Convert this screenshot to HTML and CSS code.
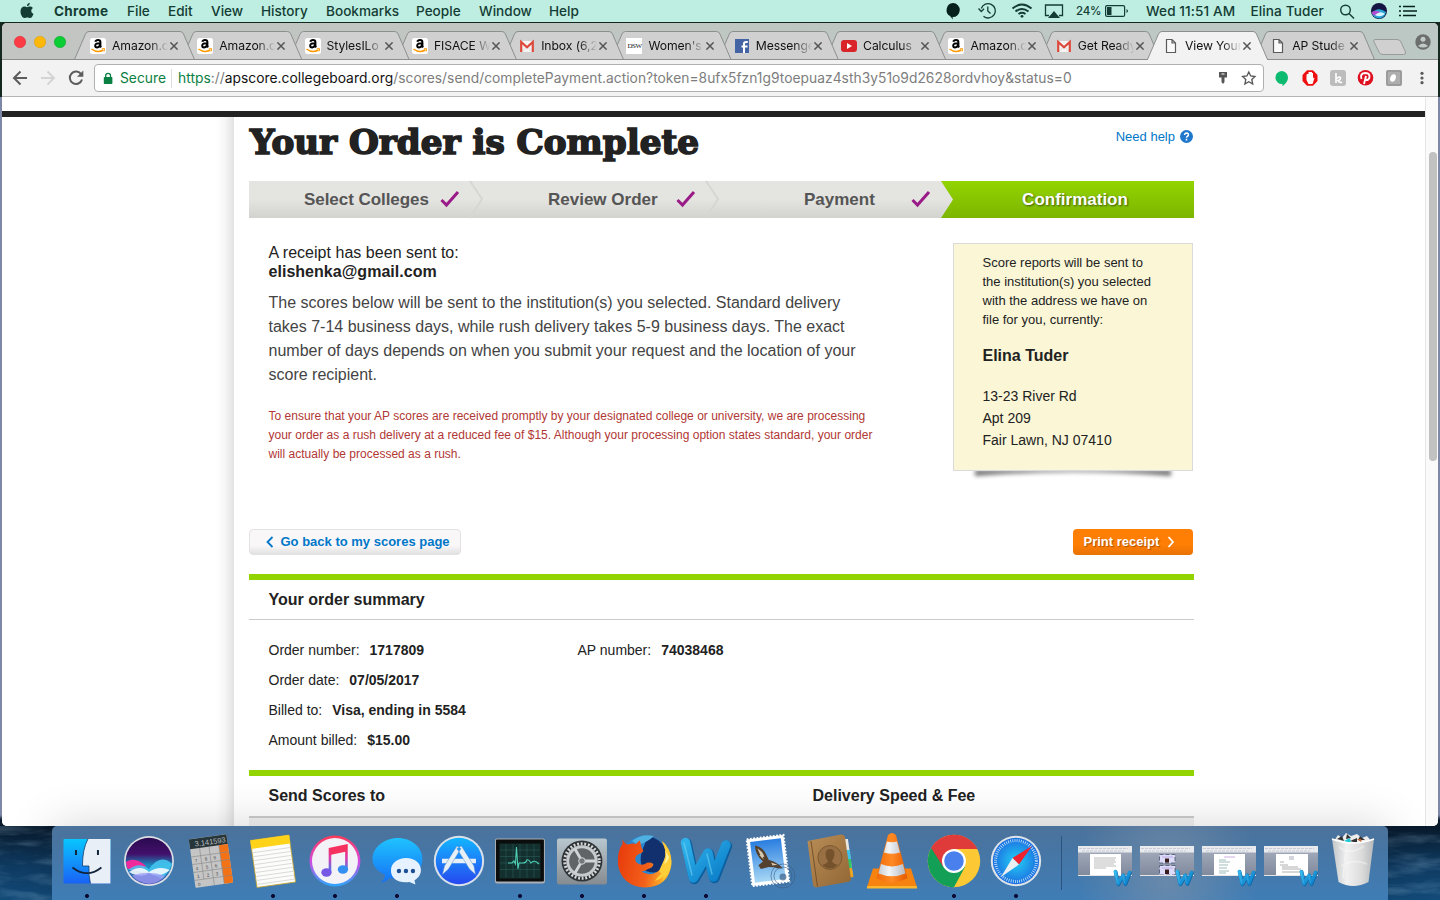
FILE: index.html
```html
<!DOCTYPE html>
<html lang="en">
<head>
<meta charset="utf-8">
<title>View Your Order</title>
<link rel="stylesheet" href="styles.css">
</head>
<body>
<svg class="defs" width="0" height="0">
  <defs>
    <linearGradient id="gBlue" x2="0" y2="1"><stop stop-color="#1fc3ff"/><stop offset="1" stop-color="#1670f5"/></linearGradient>
    <linearGradient id="gFinder" x2="0" y2="1"><stop stop-color="#08c6ff"/><stop offset="1" stop-color="#1a62f5"/></linearGradient>
    <linearGradient id="gSiri" x2="0" y2="1"><stop stop-color="#2b0a50"/><stop offset=".35" stop-color="#42106b"/><stop offset=".6" stop-color="#1a8fc0"/><stop offset="1" stop-color="#3a43a0"/></linearGradient>
    <linearGradient id="gMusic" x2="0" y2="1"><stop stop-color="#ff3a55"/><stop offset=".5" stop-color="#d44ae0"/><stop offset="1" stop-color="#28a8ff"/></linearGradient>
    <linearGradient id="gNote" x2="0" y2="1"><stop stop-color="#ff2d55"/><stop offset=".5" stop-color="#d63bb0"/><stop offset="1" stop-color="#3a7ff0"/></linearGradient>
    <linearGradient id="gApp" x2="0" y2="1"><stop stop-color="#12b5ff"/><stop offset="1" stop-color="#2748f0"/></linearGradient>
    <linearGradient id="gSteel" x2="0" y2="1"><stop stop-color="#b9c7ce"/><stop offset="1" stop-color="#858b90"/></linearGradient>
    <linearGradient id="gWord" x2="1" y2="1"><stop stop-color="#2fb2ea"/><stop offset="1" stop-color="#0a7cc8"/></linearGradient>
    <linearGradient id="gSky" x2="0" y2="1"><stop stop-color="#2a7ee0"/><stop offset="1" stop-color="#a8d8f5"/></linearGradient>
    <linearGradient id="gBook" x2="1" y2="1"><stop stop-color="#b98d56"/><stop offset="1" stop-color="#936735"/></linearGradient>
    <linearGradient id="gCone" x2="1"><stop stop-color="#f06a08"/><stop offset=".5" stop-color="#ff8a24"/><stop offset="1" stop-color="#e45a00"/></linearGradient>
    <linearGradient id="gConeW" x2="1"><stop stop-color="#c9cdd2"/><stop offset=".4" stop-color="#f2f4f6"/><stop offset="1" stop-color="#b5bac0"/></linearGradient>
    <radialGradient id="gSafari"><stop stop-color="#22d0f5"/><stop offset="1" stop-color="#1d6fe0"/></radialGradient>
    <linearGradient id="gFlame" x2="1" y2=".2"><stop stop-color="#e8380a"/><stop offset=".65" stop-color="#f2601a"/><stop offset="1" stop-color="#ffb52a"/></linearGradient>
    <linearGradient id="gTrash" x2="1"><stop stop-color="#c3c5c6"/><stop offset=".35" stop-color="#f1f1f1"/><stop offset=".7" stop-color="#dcdcdc"/><stop offset="1" stop-color="#b5b8ba"/></linearGradient>
    <linearGradient id="gThumb" x2="0" y2="1"><stop stop-color="#a8b0bf"/><stop offset="1" stop-color="#7f899c"/></linearGradient>
    <symbol id="tab" viewBox="0 0 122 29"><path d="M.5 28.5 L11.5 3 Q12.5 .5 15 .5 H106 Q108.500 .5 109.500 3 L120.500 28.500" stroke="#8c8f8e"/></symbol>
    <symbol id="amazon" viewBox="0 0 16 16"><rect width="16" height="16" rx="2.500" fill="#fff"/><path d="M5.300 3.800 Q5.800 1.900 8 1.900 Q10.400 1.900 10.400 4.200 V7.500 Q10.400 8.600 11.200 9.400 M10.200 5.200 Q5.200 5 5.200 7.700 Q5.300 9.500 7.200 9.400 Q9.600 9.200 10.200 6.800" fill="none" stroke="#000" stroke-width="2"/><path d="M1.500 11 Q7.500 15.500 13.300 12" fill="none" stroke="#f90" stroke-width="1.500"/><path d="M11.800 10.800 L14.600 10.700 L14 13.500" fill="none" stroke="#f90"/></symbol>
    <symbol id="gmail" viewBox="0 0 16 16"><rect x="1" y="3" width="14" height="11" rx="1" fill="#f5f3f2"/><path d="M3 13.500 L8 8.500 L13 13.500" fill="none" stroke="#ddd"/><path d="M2.200 14 V4 L8 9.300 L13.800 4 V14" fill="none" stroke="#dc483a" stroke-width="2.200"/></symbol>
    <symbol id="page" viewBox="0 0 16 16"><path d="M3.500 1.500 H9 L12.500 5 V14.500 H3.500 Z M9 1.500 V5 H12.500" fill="#fafafa" stroke="#5b5b5b" stroke-width="1.200"/></symbol>
    <symbol id="x" viewBox="0 0 8 8"><path d="M.4 .4 L7.600 7.600 M7.600 .4 L.4 7.600" stroke="#555" stroke-width="1.500"/></symbol>
    <symbol id="check" viewBox="0 0 20 18"><path d="M1.500 10 L6.500 15 L18 2" fill="none" stroke="#9a1a87" stroke-width="3"/></symbol>
    <symbol id="word" viewBox="0 0 54 48"><g fill="none" stroke-linecap="round" stroke-linejoin="round"><path d="M7.500 6.500 L15.500 42 L30 17 L35.500 41 L48 9" stroke="#0b5f9e" stroke-width="10.500"/><path d="M6.500 5.500 L14.500 41 L29 16 L34.500 40 L47 8" stroke="url(#gWord)" stroke-width="9.500"/><path d="M5 6 L13 38 M28 17 L33 37" stroke="#6cd0f5" stroke-width="1.500" opacity=".6"/></g></symbol>
  </defs>
</svg>

<header class="menubar">
  <svg class="apple" width="14" height="17" viewBox="0 0 14 17"><path d="M9.800 .8 Q9.800 3.800 6.900 4.300 Q6.900 1.600 9.800 .8 M7 5.200 C8 5.200 8.700 4.500 10 4.500 C11.400 4.500 12.300 5.200 12.900 6 C10.500 7.600 10.900 10.700 13.500 11.900 C12.600 14.200 11.500 16 10.100 16 C9 16 8.600 15.400 7.300 15.400 C6 15.400 5.500 16 4.500 16 C2.300 16 .5 12.300 .5 9.500 C.5 6.400 2.400 4.600 4.500 4.600 C5.700 4.600 6.200 5.200 7 5.200Z" fill="#143c34"/></svg>
  <nav class="menus"><b>Chrome</b><span>File</span><span>Edit</span><span>View</span><span>History</span><span>Bookmarks</span><span>People</span><span>Window</span><span>Help</span></nav>
  <div class="status">
    <svg width="130" height="22" viewBox="0 0 130 22">
      <path d="M8 3 A7 7 0 1 1 7.500 17 L8 19.500 Q7 18 5 16 A7 7 0 0 1 8 3" fill="#06201b"/>
      <g fill="none" stroke="#143c34" stroke-width="1.300"><path d="M36.300 8.500 A7.200 7.200 0 1 1 38.500 16.300"/><path d="M33.500 8.500 L36.300 11.500 L39 8.700 M42.800 6.500 V11 L45.500 13.500" /></g>
      <g fill="none" stroke="#143c34" stroke-width="2"><path d="M67.500 8.500 Q77 .5 86.500 8.500 M70.500 11.500 Q77 6.500 83.500 11.500 M73.500 14 Q77 11.500 80.500 14"/></g><circle cx="77" cy="16.300" r="1.400" fill="#143c34"/>
      <path d="M104 15.500 H100.500 V5 H117.500 V15.500 H114" fill="none" stroke="#143c34" stroke-width="1.300"/><path d="M103 18 L109 11 L115 18Z" fill="#143c34"/>
    </svg>
    <span class="pct">24%</span>
    <svg class="battery" width="24" height="12" viewBox="0 0 24 12"><rect x=".6" y=".6" width="19" height="10.800" rx="1.500" fill="none" stroke="#143c34" stroke-width="1.200"/><rect x="2" y="2" width="4.500" height="8" fill="#143c34"/><path d="M21.500 4 V8 Q23 7 23 6 T21.500 4" fill="#143c34"/></svg>
    <span class="clock">Wed 11:51 AM</span><span class="user">Elina Tuder</span>
    <svg width="80" height="22" viewBox="0 0 80 22"><g fill="none" stroke="#143c34" stroke-width="1.400"><circle cx="5.500" cy="10" r="4.800"/><path d="M9 13.500 L14 18.500"/></g><circle cx="39" cy="11" r="8" fill="#151545"/><path d="M32 13 Q38 6 46 12 Q45 17 40 18.500 Q33 18 32 13" fill="#29a8d8"/><path d="M32 12 Q37 9 41 13 Q37 18 32 14" fill="#b04ad0"/><path d="M35 15 Q40 10 45 14 Q40 18 35 15" fill="#d5f6ff"/><path d="M59 6.500 H61 M63 6.500 H75 M59 11 H61 M63 11 H77 M59 15.500 H61 M63 15.500 H76" stroke="#06201b" stroke-width="1.700"/></svg>
  </div>
</header>

<main class="window">
  <div class="tabstrip">
    <svg class="shapes" width="1436" height="37" viewBox="2 23 1436 37">
      <path d="M2 59.500 H1438" stroke="#8c8f8e"/>
      <g fill="#d0d0d0"><use href="#tab" x="1254" y="31" width="122" height="29"/>
      <use href="#tab" x="1039.700" y="31" width="122" height="29"/><use href="#tab" x="932.400" y="31" width="122" height="29"/><use href="#tab" x="825.100" y="31" width="122" height="29"/><use href="#tab" x="717.800" y="31" width="122" height="29"/><use href="#tab" x="610.500" y="31" width="122" height="29"/><use href="#tab" x="503" y="31" width="122" height="29"/><use href="#tab" x="395.900" y="31" width="122" height="29"/><use href="#tab" x="288.600" y="31" width="122" height="29"/><use href="#tab" x="181.300" y="31" width="122" height="29"/><use href="#tab" x="74" y="31" width="122" height="29"/></g>
      <path d="M2 59.500 H1438" stroke="#8c8f8e"/>
      <use href="#tab" x="1147" y="31" width="122" height="29" fill="#f2f2f2"/><path d="M1148 59.500 H1267" stroke="#f2f2f2"/>
      <path d="M1375 39.500 H1397 Q1400 39.500 1401 42 L1405.500 52 Q1406 54.500 1403.500 54.500 H1383 Q1380 54.500 1379 52 L1374 42 Q1373 39.500 1375 39.500" fill="#d0d0d0" stroke="#989b9a"/>
      <circle cx="1423" cy="42" r="7.700" fill="#6b6e6d"/><circle cx="1423" cy="39.300" r="2.500" fill="#c2cac7"/><path d="M1418 46 Q1423 41 1428 46 Q1423 49 1418 46" fill="#c2cac7"/>
      <circle cx="20" cy="42" r="5.700" fill="#fc3b45" stroke="#df2d37" stroke-width=".6"/><circle cx="40" cy="42" r="5.700" fill="#fdb80a" stroke="#dd9e08" stroke-width=".6"/><circle cx="60" cy="42" r="5.700" fill="#0bce35" stroke="#0baa2c" stroke-width=".6"/>
    </svg>
    <div class="tabs">
      <div class="tab"><svg><use href="#amazon"/></svg><span>Amazon.c</span><svg class="x"><use href="#x"/></svg></div>
      <div class="tab"><svg><use href="#amazon"/></svg><span>Amazon.c</span><svg class="x"><use href="#x"/></svg></div>
      <div class="tab"><svg><use href="#amazon"/></svg><span>StylesILo</span><svg class="x"><use href="#x"/></svg></div>
      <div class="tab"><svg><use href="#amazon"/></svg><span>FISACE W</span><svg class="x"><use href="#x"/></svg></div>
      <div class="tab"><svg><use href="#gmail"/></svg><span>Inbox (6,2</span><svg class="x"><use href="#x"/></svg></div>
      <div class="tab"><i class="dsw">DSW</i><span>Women's</span><svg class="x"><use href="#x"/></svg></div>
      <div class="tab"><svg viewBox="0 0 16 16"><rect x="1" y="1" width="14" height="14" fill="#4463a5"/><path d="M10 15 V5.800 Q10 4 12 4 H13.800 M7.500 8.500 H13.500" stroke="#fff" stroke-width="2" fill="none"/></svg><span>Messenge</span><svg class="x"><use href="#x"/></svg></div>
      <div class="tab"><svg viewBox="0 0 16 16"><rect y="2" width="16" height="12" rx="3" fill="#d9252a"/><path d="M6 5 L11 8 L6 11Z" fill="#fff"/></svg><span>Calculus</span><svg class="x"><use href="#x"/></svg></div>
      <div class="tab"><svg><use href="#amazon"/></svg><span>Amazon.c</span><svg class="x"><use href="#x"/></svg></div>
      <div class="tab"><svg><use href="#gmail"/></svg><span>Get Ready</span><svg class="x"><use href="#x"/></svg></div>
      <div class="tab"><svg><use href="#page"/></svg><span>View Your</span><svg class="x"><use href="#x"/></svg></div>
      <div class="tab"><svg><use href="#page"/></svg><span>AP Stude</span><svg class="x"><use href="#x"/></svg></div>
    </div>
  </div>

  <div class="toolbar">
    <svg class="nav" width="92" height="36" viewBox="2 60 92 36"><g fill="none" stroke-width="2"><path d="M27 78 H14 M20.500 71.500 L14 78 L20.500 84.500" stroke="#5d5d5d"/><path d="M41 78 H54 M47.500 71.500 L54 78 L47.500 84.500" stroke="#d4d4d4"/><path d="M81.300 74.500 A6.200 6.200 0 1 0 82 79.500" stroke="#5d5d5d"/></g><path d="M83.300 70.500 V76.700 H77Z" fill="#5d5d5d"/></svg>
    <div class="omnibox">
      <svg width="10" height="13" viewBox="0 0 10 13"><rect x=".8" y="5" width="8.600" height="7" rx=".8" fill="#0b8043"/><path d="M2.700 5.500 V3.500 Q2.700 1.300 5.100 1.300 T7.500 3.500 V5.500" fill="none" stroke="#0b8043" stroke-width="1.300"/></svg>
      <span class="secure">Secure</span><i class="sep"></i>
      <span class="url"><span class="green">https</span>://<span class="host">apscore.collegeboard.org</span>/scores/send/completePayment.action?token=8ufx5fzn1g9toepuaz4sth3y51o9d2628ordvhoy&amp;status=0</span>
      <svg class="oicons" width="42" height="20" viewBox="1216 68 42 20"><path d="M1219 72 H1227 V77.500 H1224.500 V82 L1223 84 L1221.500 82 V77.500 H1219Z" fill="#555"/><path d="M1221.500 74 H1224.500" stroke="#fff"/><path d="M1248.800 72 L1250.700 76 L1255 76.500 L1251.800 79.500 L1252.700 84 L1248.800 81.700 L1244.900 84 L1245.800 79.500 L1242.600 76.500 L1246.900 76Z" fill="none" stroke="#555" stroke-width="1.300"/></svg>
    </div>
    <svg width="174" height="36" viewBox="1264 60 174 36"><path d="M1281.500 71 A6.600 6.400 0 0 1 1288 77.500 Q1288 82 1282.500 86.300 V84 A6.600 6.500 0 0 1 1281.500 71" fill="#0dbb70"/>
      <path d="M1307 70.200 H1313 L1317.500 75 V81 L1313 85.800 H1307 L1302.500 81 V75Z" fill="#ee1010"/><path d="M1306.500 75 V80 L1308.500 84 H1312.500 L1314.500 78 L1313.500 77.500 L1313 79 V73 H1312 V72 H1308.500 V74 H1307Z" fill="#fff"/>
      <rect x="1330" y="70" width="16" height="16" rx="3" fill="#bcbcbc"/><path d="M1336 73 V83 M1336 79 Q1340 75.500 1340.500 78 Q1340.500 80 1338 80.500 Q1340 83.500 1342 82" fill="none" stroke="#fff" stroke-width="1.600"/>
      <circle cx="1365.500" cy="77.700" r="7.800" fill="#df1020"/><path d="M1364 84 L1366 76 M1361.500 79 Q1359.500 73.300 1365.500 73 Q1370.500 73.300 1369.300 78 Q1367.500 81.500 1365 79" fill="none" stroke="#fff" stroke-width="1.900"/>
      <rect x="1386" y="70" width="16" height="16" rx="2" fill="#9b9b9b"/><rect x="1388" y="72" width="12" height="12" fill="#aeaeae"/><ellipse cx="1393" cy="78" rx="2.700" ry="3.900" transform="rotate(20 1393 78)" fill="#fff"/>
      <g fill="#5a5a5a"><circle cx="1422" cy="73.300" r="1.600"/><circle cx="1422" cy="78" r="1.600"/><circle cx="1422" cy="82.700" r="1.600"/></g></svg>
  </div>

  <div class="viewport">
    <div class="doc">
      <div class="blackbar"></div>
      <div class="columns">
        <div class="gutter"></div>
        <div class="content">
          <div class="titlerow">
            <h1><svg width="460" height="46" viewBox="0 0 460 46"><text x="1" y="36.500" textLength="449" lengthAdjust="spacingAndGlyphs">Your Order is Complete</text></svg></h1>
            <a class="help">Need help <svg width="13" height="13" viewBox="0 0 13 13"><circle cx="6.500" cy="6.500" r="6.500" fill="#1f78cc"/><path d="M4.600 5 Q4.700 3.100 6.600 3.100 Q8.500 3.200 8.400 4.800 Q8.300 5.700 7.300 6.300 Q6.500 6.800 6.500 7.800 M6.500 8.800 V10.400" fill="none" stroke="#fff" stroke-width="1.500"/></svg></a>
          </div>
          <div class="steps">
            <div class="step s1"><span>Select Colleges</span><svg class="ck"><use href="#check"/></svg><svg class="chev" width="16" height="37" viewBox="0 0 16 37"><path d="M0 0 L12 18 L0 37" fill="none" stroke="#d6d6d2" stroke-width="2"/></svg></div>
            <div class="step s2"><span>Review Order</span><svg class="ck"><use href="#check"/></svg><svg class="chev" width="16" height="37" viewBox="0 0 16 37"><path d="M0 0 L12 18 L0 37" fill="none" stroke="#d6d6d2" stroke-width="2"/></svg></div>
            <div class="step s3"><span>Payment</span><svg class="ck"><use href="#check"/></svg></div>
            <div class="step s4"><span>Confirmation</span></div>
          </div>
          <div class="intro">
            <div class="copy">
              <p class="receipt">A receipt has been sent to:<br><b>elishenka@gmail.com</b></p>
              <p class="scores">The scores below will be sent to the institution(s) you selected. Standard delivery<br>takes 7-14 business days, while rush delivery takes 5-9 business days. The exact<br>number of days depends on when you submit your request and the location of your<br>score recipient.</p>
              <p class="warn">To ensure that your AP scores are received promptly by your designated college or university, we are processing<br>your order as a rush delivery at a reduced fee of $15. Although your processing option states standard, your order<br>will actually be processed as a rush.</p>
            </div>
            <div class="notewrap">
              <svg class="curl" width="212" height="16" viewBox="0 0 212 16"><path d="M8 0 H204 V6 Q106 -2 8 6Z" fill="#000" opacity=".55"/></svg>
              <aside class="note">
                <p class="n1">Score reports will be sent to<br>the institution(s) you selected<br>with the address we have on<br>file for you, currently:</p>
                <p class="n2">Elina Tuder</p>
                <p class="n3">13-23 River Rd<br>Apt 209<br>Fair Lawn, NJ 07410</p>
              </aside>
            </div>
          </div>
          <div class="buttons">
            <a class="back"><svg width="8" height="12" viewBox="0 0 8 12"><path d="M6.500 1 L1.500 6 L6.500 11" fill="none" stroke="#0077c8" stroke-width="1.800"/></svg>Go back to my scores page</a>
            <a class="print">Print receipt<svg width="8" height="12" viewBox="0 0 8 12"><path d="M1.500 1 L6 6 L1.500 11" fill="none" stroke="#fff" stroke-width="1.800"/></svg></a>
          </div>
          <section class="summary">
            <h2>Your order summary</h2>
            <div class="facts">
              <div><p>Order number:<b>1717809</b></p><p>Order date:<b>07/05/2017</b></p><p>Billed to:<b>Visa, ending in 5584</b></p><p>Amount billed:<b>$15.00</b></p></div>
              <div><p>AP number:<b>74038468</b></p></div>
            </div>
          </section>
          <section class="send"><h2>Send Scores to</h2><h2>Delivery Speed &amp; Fee</h2></section>
          <div class="tablehead"></div>
        </div>
      </div>
    </div>
    <div class="scroll"><div class="thumb"></div></div>
  </div>
</main>

<footer class="desktop">
  <svg class="waves" width="1440" height="74"><defs><filter id="sea" x="0" y="0" width="1" height="1"><feTurbulence type="fractalNoise" baseFrequency=".02 .1" numOctaves="4" seed="4"/><feColorMatrix values="0 0 0 0 .3  0 0 0 0 .5  0 0 0 0 .68  1.200 0 0 0 -.5"/></filter></defs><rect width="1440" height="74" filter="url(#sea)"/></svg>
  <div class="dock">
    <svg class="run" viewBox="-31 -35 62 74"><rect x="-23.500" y="-22" width="47" height="44.500" rx="1" fill="url(#gFinder)"/><path d="M1 -22 H23.500 V22.500 H3.500 Q1.500 15 2 5 H-4.500 Q-4.500 -12 1 -22" fill="#e9eff7"/><path d="M-11 -11 V-6 M11 -11 V-6" stroke="#12243a" stroke-width="2"/><path d="M-14.500 6.500 Q0 18 14.500 6.500" fill="none" stroke="#12243a" stroke-width="1.700"/><path d="M1 -22 Q-4.500 -12 -4.500 5 H2 Q1.500 15 3.500 22.500" fill="none" stroke="#12406a" stroke-width=".8"/></svg>
    <svg viewBox="-31 -35 62 74"><circle r="25" fill="#dcdfe5"/><circle r="23.300" fill="url(#gSiri)"/><path d="M-23 1 Q-14 -5 -3 5 Q-12 14 -22 7" fill="#f02a9c"/><path d="M-21 9 Q-10 0 0 8 Q12 -8 23 3 Q19 13 13 18 Q0 10 -21 9" fill="#45c9f2" opacity=".85"/><path d="M-20 11 Q-8 3 0 11 Q10 4 21 9 Q10 18 0 12 Q-8 18 -20 11" fill="#fff" opacity=".85"/><path d="M-17 14.500 Q0 9 16 15 Q10 22.500 0 23 Q-11 22 -17 14.500" fill="#9d9cf5" opacity=".8"/></svg>
    <svg viewBox="-31 -35 62 74"><g transform="rotate(-8)"><rect x="-19" y="-24.500" width="38" height="49" rx="1" fill="#c5c5c5"/><rect x="-19" y="-24.500" width="38" height="10" fill="#26353a"/><rect x="10" y="-14.500" width="9" height="39" fill="#f47216"/><path d="M-19 -6.700 H19 M-19 1 H19 M-19 9 H19 M-19 17 H19 M-9.500 -14.500 V17 M0 -14.500 V24.500 M10 -14.500 V24.500" stroke="#888" stroke-width=".6"/><text x="17.500" y="-16.500" class="calc" text-anchor="end">3.141593</text><g class="keys"><text x="-16" y="-1">7</text><text x="-6" y="-1">8</text><text x="3" y="-1">9</text><text x="-16" y="7">4</text><text x="-6" y="7">5</text><text x="3" y="7">6</text><text x="-16" y="15">1</text><text x="-6" y="15">2</text><text x="3" y="15">3</text><text x="-16" y="23">0</text></g></g></svg>
    <svg class="run" viewBox="-31 -35 62 74"><g transform="rotate(-8)"><rect x="-19.500" y="-23.500" width="39" height="47.500" fill="#fcfcfa" stroke="#c5a52c" stroke-width=".8"/><rect x="-19.500" y="-23.500" width="39" height="8.500" fill="#ffd31a"/><path d="M-19 -11 H19 M-19 -7 H19 M-19 -3 H19 M-19 1 H19 M-19 5 H19 M-19 9 H19 M-19 13 H19 M-19 17 H19 M-19 21 H19" stroke="#d8d8d8" stroke-width=".9"/></g></svg>
    <svg class="run" viewBox="-31 -35 62 74"><circle r="25.500" fill="url(#gMusic)"/><circle r="23" fill="#f3f3f7"/><path d="M-5 10.500 V-12 L11.500 -15.500 V8" fill="none" stroke="url(#gNote)" stroke-width="2.600"/><path d="M-5 -12.500 L11.500 -16 V-9.500 L-5 -6Z" fill="#f5315f"/><ellipse cx="-8.500" cy="11.500" rx="5.200" ry="4.200" fill="#7656e5"/><ellipse cx="8" cy="8.500" rx="5.200" ry="4.200" fill="#338ff0"/></svg>
    <svg class="run" viewBox="-31 -35 62 74"><path d="M1 -23 C14 -23 25.500 -14 25.500 -2 C25.500 10 14 18 1 18 Q-4 18 -7 17 Q-11 21 -16.500 22 Q-12 18 -12 14 C-20 10 -24.500 5 -24.500 -2 C-24.500 -14 -12 -23 1 -23" fill="url(#gBlue)"/><path d="M9 -3 C18 -3 24 2 24 9.500 Q24 15 17.500 19.500 L18.500 23.500 L12.500 21 C2 22.500 -6 18 -6 9.500 C-6 2 1 -3 9 -3" fill="#e6f2ff"/><g fill="#1d4f94"><circle cx="2" cy="10" r="2.200"/><circle cx="9" cy="10" r="2.200"/><circle cx="16" cy="10" r="2.200"/></g></svg>
    <svg viewBox="-31 -35 62 74"><circle r="25.200" fill="#d9e2ea"/><circle r="23.200" fill="url(#gApp)"/><path d="M-17 -2.200 H17 V2.200 H-17Z" fill="#e7f0f7"/><path d="M-16.500 13.500 L-14.500 5 L-2 -15 L2 -12.500 L-10.500 8Z M16.500 13.500 L15 5 L2.500 -15 L-2 -12.500 L10.500 8Z" fill="#e7f0f7" stroke="#5a8fd0" stroke-width=".5"/></svg>
    <svg class="run" viewBox="-31 -35 62 74"><rect x="-25" y="-22.500" width="50" height="45" rx="2" fill="#aab0b5"/><rect x="-24" y="-21.500" width="48" height="42" rx="1" fill="#0b0d0d"/><rect x="-20.500" y="-17.500" width="41" height="35" fill="#13302f"/><path d="M-20 -11 H20 M-20 -4.500 H20 M-20 2 H20 M-20 8.500 H20 M-14 -17 V17 M-7 -17 V17 M0 -17 V17 M7 -17 V17 M14 -17 V17" stroke="#2f6461" stroke-width=".5"/><path d="M-12 2 H-8 L-6 0 L-4.500 3 L-3.500 -14 L-2 8 L-1 2 H3 Q6 2 7 -1 Q9 -2 11 2 Q14 -2 19 3" fill="none" stroke="#4fcfb4" stroke-width="1.100"/></svg>
    <svg class="run" viewBox="-31 -35 62 74"><rect x="-25" y="-22.500" width="50" height="46" rx="2" fill="url(#gSteel)"/><circle r="20.500" fill="#303436"/><circle r="17.300" fill="none" stroke="#d4d7d9" stroke-width="3" stroke-dasharray="1.900 1.724"/><circle r="14.300" fill="#606466" stroke="#c8cbce" stroke-width="3"/><path d="M0 0 H13.500 M0 0 L-7 -12 M0 0 L-7 12" stroke="#d2d5d8" stroke-width="2.800"/><circle r="3.300" fill="#74787a" stroke="#d2d5d8"/></svg>
    <svg class="run" viewBox="-31 -35 62 74"><circle cx="1" cy="-1" r="24.500" fill="#2c86cf"/><path d="M4 -25 Q26 -20 23 4 Q16 15 2 10 Q-6 4 -2 -10Z" fill="#12306e"/><path d="M-12 -20 Q-2 -28 10 -25 Q4 -19 -6 -16Z" fill="#4fb0e2"/><path d="M-21.500 -22 Q-20 -17 -16 -16.500 Q-11 -18 -8 -17 Q-5 -20 -4 -20.500 L-2.500 -13.500 L-.5 -10 Q-2 -7.500 -6 -6.500 Q-10 -4 -8 1 Q-4 5 1 3 Q5 0 9.500 3 Q9 7 4 8 Q0 11 -3 10 Q4 16 13 11 Q24 4 21 -12 Q19 -17 18 -20 Q28 -12 27.500 3 Q25 26 1 26.500 Q-22 25.500 -26 4 Q-27 -10 -21.500 -17Z" fill="url(#gFlame)"/><path d="M18 -20 Q24 -9 20 -1 L16 8 Q14 12 18 12 Q12 18 11 20 Q17 18 20 15 Q19 18 18 20 Q28 11 27.500 0 Q26 -14 18 -20" fill="#ffcf3a"/><path d="M21 -11 Q24 -4 20 3 Q24 1 25 -4" fill="#fff2a0"/></svg>
    <svg class="run" viewBox="-31 -35 62 74"><use href="#word" x="-27" y="-24" width="54" height="48"/></svg>
    <svg viewBox="-31 -35 62 74"><g transform="rotate(-7)"><rect x="-18.500" y="-24" width="37" height="47" fill="#fff"/><rect x="-18.500" y="-24" width="37" height="47" fill="none" stroke="#fff" stroke-width="2.200" stroke-dasharray="1.800 1.500"/><rect x="-15.500" y="-21" width="31" height="41" fill="url(#gSky)"/><path d="M-11 -17 Q-3 -14 -1 -7 L1 -1 Q8 1 14 9 Q8 9 5 7 L0 6 L-8 7 L-10 3 L-5 0 Q-12 -8 -11 -17" fill="#54402c"/><path d="M-9 -14 Q-4 -10 -3 -5 L-6 -4Z M-8 -7 L-5 -6 L-4 -2Z M3 2 L9 5 L4 5Z" fill="#d5c8b0"/></g><g fill="none" stroke="#3c5c84" stroke-width="1" opacity=".6"><circle cx="15" cy="15" r="12"/><circle cx="15" cy="15" r="9"/></g><circle cx="15" cy="16" r="3.500" fill="#2c4c78" opacity=".6"/></svg>
    <svg viewBox="-31 -35 62 74"><path d="M14 -22 L18 -22 L23 15 L14 19Z" fill="#e9e9e4"/><path d="M16 -11 H20 L21 -2 H16Z" fill="#3fc1e8"/><path d="M16 -2 H21 L22 7 H16Z" fill="#31c468"/><path d="M16 7 H22 L23.500 16 L16 17Z" fill="#f0a51e"/><path d="M-22.500 -20 L11 -26.500 Q14.500 -26.500 15 -24 L21 18 Q21 20.500 18 21 L-14 26.500 Q-16.500 26 -17 24Z" fill="url(#gBook)"/><path d="M-19 -20 L-12.500 25.500" stroke="#74512a"/><circle cx="0" cy="-3.500" r="12" fill="#987044" stroke="#7b5831"/><path d="M0 -12 Q5 -12 4.500 -6 Q4 -2 2 0 Q3 3 8 4 Q0 11 -8 4 Q-3 3 -2 0 Q-4.500 -3 -4.500 -7 Q-4 -12 0 -12" fill="#75522c"/></svg>
    <svg viewBox="-31 -35 62 74"><path d="M-19 7.500 H19 L25 26 H-25Z" fill="#f6820f"/><path d="M-25 25 H25 V27.500 H-25Z" fill="#ffb52c"/><path d="M-4 -26 Q0 -30 4 -26 L15.500 17 Q0 26 -15.500 17Z" fill="url(#gCone)"/><path d="M-5 -19.500 Q0 -18 5 -19.500 L8 -8.500 Q0 -6 -8 -8.500Z M-11 3 Q0 8 11 3 L13.500 12.500 Q0 18 -13.500 12.500Z" fill="url(#gConeW)"/></svg>
    <svg class="run" viewBox="-31 -35 62 74"><circle r="26.300" fill="#fcc934"/><path d="M0 0 L-22.700 -13.100 A26.300 26.300 0 0 0 0 26.300 L11 6Z" fill="#139f55"/><path d="M0 -12 L-11 5.500 L-22.800 -13.100 A26.300 26.300 0 0 1 23.500 -12Z" fill="#df3b3b"/><circle r="12" fill="#fff"/><circle r="9.800" fill="#4a80ee"/></svg>
    <svg class="run" viewBox="-31 -35 62 74"><circle r="25.200" fill="#dfe4e8"/><circle r="23.200" fill="url(#gSafari)"/><circle r="20.500" fill="none" stroke="#d6f0ff" stroke-width="3" stroke-dasharray=".7 1.450"/><path d="M16 -15 L3 3.500 L-3.500 -3Z" fill="#f0222e"/><path d="M-15 16 L3 3.500 L-3.500 -3Z" fill="#eceff2"/></svg>
    <i class="divider"></i>
    <div class="thumbs">
      <svg viewBox="0 0 62 42"><rect width="54" height="30" fill="url(#gThumb)"/><rect width="54" height="6.500" fill="#e8eaee"/><path d="M1 2.500 H50 M4 5 H46" stroke="#c9ccd6" stroke-dasharray="3 1"/><rect x="12" y="8" width="31" height="21" fill="#fff"/><path d="M16 12 H38 M16 14 H37 M16 16 H38 M16 18 H36 M16 20 H38 M16 22 H28" stroke="#aaa" stroke-width=".8"/><rect y="29" width="54" height="1" fill="#e5e5e8"/><use href="#word" x="35" y="23" width="19" height="18"/></svg>
      <svg viewBox="0 0 62 42"><rect width="54" height="30" fill="url(#gThumb)"/><rect width="54" height="6.500" fill="#e8eaee"/><path d="M1 2.500 H50 M4 5 H46" stroke="#c9ccd6" stroke-dasharray="3 1"/><path d="M19.500 8.500 H35 V17 H19.500Z M19.500 19.500 H35 V29 H19.500Z" fill="#dcdcf8" stroke="#485070" stroke-width=".8" stroke-dasharray="4 2"/><path d="M22 11 H33 M22 22 H33" stroke="#b9a0e0" stroke-width=".8"/><path d="M25 12.500 H29 V16.500 H25Z M25 23.500 H29 V28 H25Z" fill="#3b1c1c"/><rect y="29" width="54" height="1" fill="#e5e5e8"/><use href="#word" x="35" y="23" width="19" height="18"/></svg>
      <svg viewBox="0 0 62 42"><rect width="54" height="30" fill="url(#gThumb)"/><rect width="54" height="6.500" fill="#e8eaee"/><path d="M1 2.500 H50 M4 5 H46" stroke="#c9ccd6" stroke-dasharray="3 1"/><rect x="12" y="8" width="31" height="21" fill="#fff"/><path d="M22 11 H33" stroke="#cbaee0"/><path d="M17 14 H24 M17 16 H28 M17 19 H26 M17 22 H25 M17 25 H27 M17 27 H24" stroke="#8aa" stroke-width=".8"/><rect y="29" width="54" height="1" fill="#e5e5e8"/><use href="#word" x="35" y="23" width="19" height="18"/></svg>
      <svg viewBox="0 0 62 42"><rect width="54" height="30" fill="url(#gThumb)"/><rect width="54" height="6.500" fill="#e8eaee"/><path d="M1 2.500 H50 M4 5 H46" stroke="#c9ccd6" stroke-dasharray="3 1"/><rect x="12" y="8" width="32" height="21" fill="#fff"/><path d="M25 11 H30 M25 13 H30" stroke="#aab"/><path d="M16 16 H20 M16 19 H24 M18 21 H34 M18 23 H37 M18 26 H36" stroke="#999" stroke-width=".8"/><rect y="29" width="54" height="1" fill="#e5e5e8"/><use href="#word" x="35" y="23" width="19" height="18"/></svg>
    </div>
    <svg class="trash" viewBox="0 0 46 74"><path d="M4 15 L8 9 L12 12 L16 7 L21 10 L27 8 L32 12 L37 10 L41 15 L23 22Z" fill="#ececec"/><path d="M7 13 L12 10 L14 15Z M17 8 L21 12 L16 13Z M30 10 L35 14 L28 14Z M20 15 L27 12 L27 17Z" fill="#333"/><path d="M14 15 L20 12 L21 17Z" fill="#1cc8d8"/><path d="M27 13 L31 13 L32 17Z" fill="#c2602a"/><path d="M2 13 Q23 21 44 13 L38.500 56 Q23 64 8.500 56Z" fill="url(#gTrash)"/><path d="M2 13 Q23 21 44 13" fill="none" stroke="#fff" stroke-width="1.500"/><path d="M9 21 Q20 30 34 20 M11 40 Q24 32 37 38 M16 24 L13 52" fill="none" stroke="#fff" stroke-width="2" opacity=".35"/></svg>
  </div>
</footer>
</body>
</html>
```
FILE: styles.css
```css
* { box-sizing: border-box; }
body { margin: 0; width: 1440px; height: 900px; overflow: hidden; display: flex; flex-direction: column; background: linear-gradient(#14281f 97px, #7d87a8 97px, #7d87a8 815px, #0b1a2b 820px); font-family: "Liberation Sans", Arial, sans-serif; color: #222; }
h1, h2, p { margin: 0; }
svg { display: block; flex: none; overflow: visible; }
.defs { position: absolute; }

.menubar { height: 22px; flex: none; display: flex; background: #bdeee1; color: #143c34; font: 500 13.6px/22px Inter, sans-serif; padding-left: 20px; white-space: nowrap; }
.apple { margin: 2px 20px 0 0; }
.menus { display: grid; grid-template-columns: 73px 41px 43px 50px 65px 90px 63px 70px 40px; font-weight: 450; }
.menus b { font-weight: 700; letter-spacing: .3px; }
.status { margin-left: auto; display: flex; padding-right: 20px; }
.status > span { flex: none; }
.pct { width: 29px; font-size: 11.5px; letter-spacing: -.2px; margin-left: 1px; }
.battery { margin: 5px 0 0; }
.clock { margin-left: 17px; width: 104.500px; letter-spacing: .1px; }
.user { width: 89.500px; letter-spacing: .1px; }

.window { margin: 1px 2px 0; height: 803px; flex: none; display: flex; flex-direction: column; border-radius: 5px; overflow: hidden; background: #fff; }
.tabstrip { height: 37px; flex: none; background: linear-gradient(90deg, #c2c5c2, #bcc8c4); display: grid; }
.shapes, .tabs { grid-area: 1 / 1; }
.tabs { display: flex; padding-left: 88px; z-index: 1; }
.tab { width: 107.3px; flex: none; display: flex; padding-top: 14px; font: 12.2px/17px Inter, sans-serif; color: #111; }
.tab svg { width: 16px; height: 16px; margin-top: 1px; }
.tab span { width: 58px; margin-left: 6px; letter-spacing: -.1px; white-space: nowrap; -webkit-mask-image: linear-gradient(90deg, #000 65%, transparent 97%); mask-image: linear-gradient(90deg, #000 65%, transparent 97%); }
.tab .x { width: 8px; height: 8px; margin: 5px 0 0 0; }
.dsw { width: 16px; height: 16px; margin-top: 1px; background: #fff; font: 7px/16px "Liberation Serif", serif; text-align: center; letter-spacing: -.5px; }

.toolbar { height: 37px; flex: none; display: flex; background: #f2f2f2; border-bottom: 1px solid #b4b4b4; }
.omnibox { width: 1170px; height: 28px; margin-top: 4px; flex: none; display: flex; align-items: center; border: 1px solid #b0b0b0; border-radius: 4px; background: #fff; padding-left: 8px; font: 13.8px/26px Inter, sans-serif; color: #7d7d7d; white-space: nowrap; }
.secure { margin-left: 7px; width: 50px; color: #0b8043; }
.sep { width: 1px; height: 19px; background: #ddd; margin: 0 6px 0 1px; }
.green { color: #0b8043; }
.host { color: #111; }
.url { width: 1038px; letter-spacing: .03px; }

.viewport { flex: 1; display: flex; min-height: 0; }
.doc { width: 1423px; padding-top: 14px; overflow: hidden; }
.blackbar { height: 6px; background: #222; }
.columns { display: flex; height: 709px; }
.gutter { width: 232px; flex: none; background: linear-gradient(90deg, #fff 0, #fff 214px, #f6f6f6 223px, #e2e2e2 232px); }
.content { width: 976px; padding-left: 15px; }
.titlerow { display: flex; justify-content: space-between; width: 945px; height: 64px; }
.titlerow text { font: bold 33.5px "DejaVu Serif", serif; fill: #222; stroke: #222; stroke-width: 1.7px; }
.help { display: flex; gap: 5px; padding: 13px 1px 0 0; font-size: 13px; line-height: 14px; color: #0077c8; }
.steps { display: flex; width: 945px; height: 37px; background: linear-gradient(#e4e4e0 50%, #d2d3ce); font: bold 17px/37px "Liberation Sans", sans-serif; color: #555; }
.step { display: flex; flex: none; }
.ck { width: 20px; height: 18px; margin-top: 9px; }
.s1 { width: 237px; padding-left: 55px; }
.s1 span { width: 136px; letter-spacing: -.05px; }
.s2 { width: 236px; padding-left: 62px; }
.s2 span { width: 127.500px; }
.s3 { width: 219px; padding-left: 82px; }
.s3 span { width: 107px; }
.chev { margin-left: 10px; }
.s4 { width: 253px; background: linear-gradient(#92d400, #7db500); clip-path: polygon(0 0, 100% 0, 100% 100%, 0 100%, 12px 50%); justify-content: center; padding-left: 15px; color: #fff; text-shadow: 1px 1px 2px #3c5800; }
.intro { display: flex; justify-content: space-between; width: 944px; height: 311px; padding-top: 25px; }
.copy { padding-left: 19.500px; white-space: nowrap; }
.receipt { font-size: 16px; line-height: 19px; letter-spacing: .03px; }
.scores { font-size: 16px; line-height: 24px; margin-top: 10px; color: #444; }
.warn { font-size: 12px; line-height: 19px; margin-top: 20px; color: #b13734; letter-spacing: .008px; }
.notewrap { position: relative; width: 240px; height: 228px; }
.curl { position: absolute; left: 14px; top: 227px; filter: blur(2px); }
.note { position: relative; height: 228px; background: #faf6d6; border: 1px solid #dadada; padding: 9px 0 0 28.500px; white-space: nowrap; }
.n1 { font-size: 13px; line-height: 19px; }
.n2 { font-size: 16px; line-height: 20px; font-weight: bold; margin-top: 17px; }
.n3 { font-size: 14px; line-height: 22px; margin-top: 19px; }
.buttons { display: flex; justify-content: space-between; width: 944px; height: 45px; font-size: 13px; font-weight: bold; line-height: 24px; white-space: nowrap; }
.back, .print { display: flex; align-items: center; height: 26px; border-radius: 4px; }
.back { width: 212px; border: 1px solid #e2e2e2; background: linear-gradient(#f9f7f8 65%, #e2e2e2); color: #0077c8; padding-left: 15.500px; gap: 7px; }
.print { width: 120px; background: linear-gradient(#ff7f05 60%, #e87204); color: #fff; text-shadow: 1px 1px 1px #a85000; padding-left: 10.500px; gap: 8px; }
.summary { width: 945px; height: 196px; border-top: 6px solid #92d400; }
h2 { font-size: 16px; line-height: 39px; padding-left: 19.500px; }
.summary h2 { height: 40px; border-bottom: 1px solid #ccc; }
.facts { display: flex; padding: 15px 0 0 19.500px; font-size: 14px; line-height: 30px; }
.facts > div { width: 309px; }
.facts b { margin-left: 10px; }
.send { display: flex; width: 945px; height: 46px; border-top: 6px solid #92d400; }
.send h2 { width: 544px; flex: none; }
.send h2 + h2 { width: 400px; }
.tablehead { width: 945px; height: 20px; border-top: 2px solid #ccc; background: #f2f2f2; }
.scroll { width: 13px; background: #fafafa; border-left: 1px solid #e6e6e6; padding: 55px 1px 0 3px; }
.thumb { width: 8px; height: 309px; border-radius: 4px; background: #c1c1c1; }

.desktop { flex: none; height: 74px; position: relative; background: linear-gradient(#08192a, #0f3b62 55%, #124a78); display: flex; justify-content: center; }
.waves { position: absolute; left: 0; top: 0; opacity: .6; }
.dock { position: relative; width: 1336px; height: 74px; display: flex; padding-left: 4px; border-radius: 5px 5px 0 0; background: radial-gradient(ellipse 90px 120px at 1115px 50px, #7b90a8b0, transparent), linear-gradient(#4b729b, #3f7db6); box-shadow: 0 0 45px rgba(0, 0, 0, .17); }
.dock > svg { width: 61.93px; height: 74px; }
.dock .run { background: radial-gradient(circle at 50% 70px, #0a0c36 1.7px, transparent 2.3px); }
.divider { width: 1px; height: 54px; margin: 10px 16px 0 14px; background: #2d547e; }
.thumbs { display: flex; padding-top: 20px; }
.thumbs svg { width: 62px; height: 42px; }
.dock > .trash { width: 46px; margin-left: 4px; }
.calc { font: 7.500px "Liberation Sans", sans-serif; fill: #bbb; }
.keys { font: 4.500px "Liberation Sans", sans-serif; fill: #444; }
```
